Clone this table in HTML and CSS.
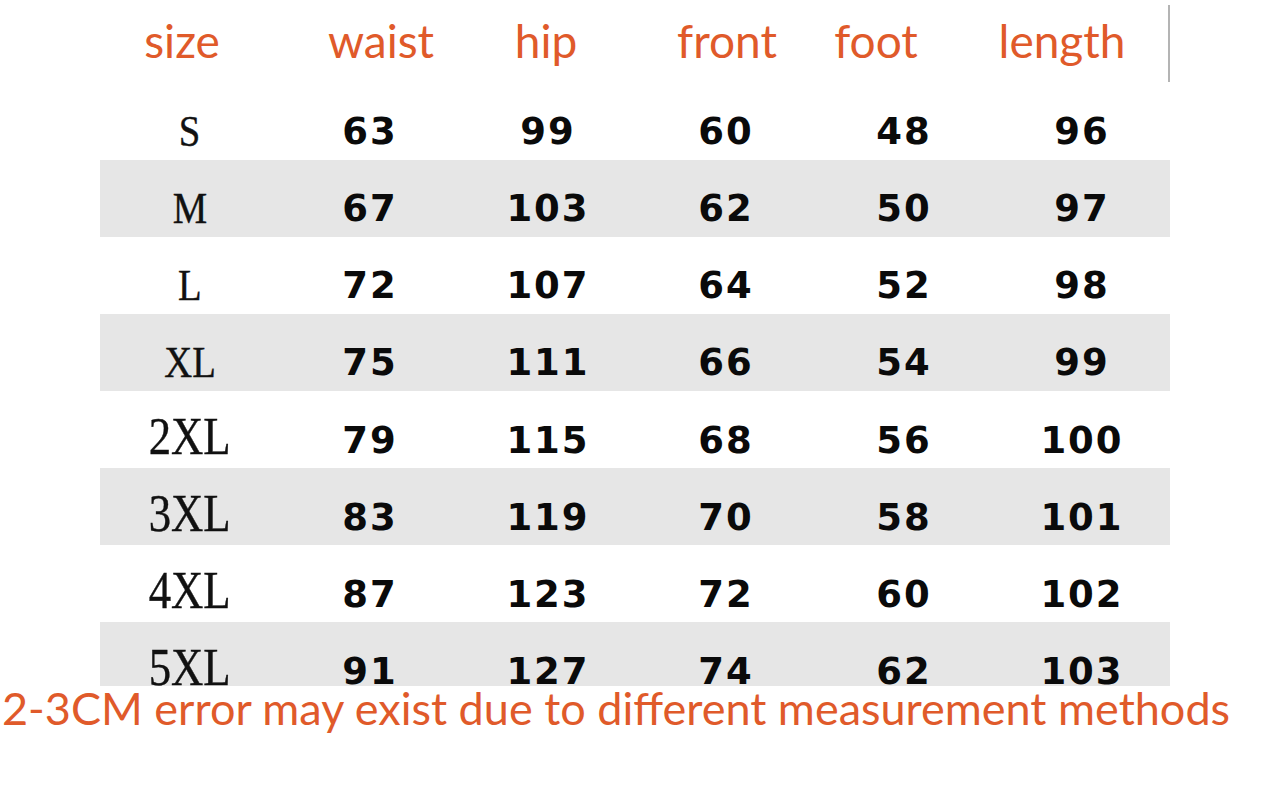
FILE: index.html
```html
<!DOCTYPE html>
<html>
<head>
<meta charset="utf-8">
<title>Size chart</title>
<link rel="stylesheet" href="styles.css">
</head>
<body>
<div class="page">
  <div class="head-wrap">
    <div class="head">
      <div class="hc">size</div>
      <div class="hc">waist</div>
      <div class="hc">hip</div>
      <div class="hc">front</div>
      <div class="hc">foot</div>
      <div class="hc">length</div>
    </div>
  </div>
  <div class="table">
    <div class="row"><div class="sz"><span>S</span></div><div class="n">63</div><div class="n">99</div><div class="n">60</div><div class="n">48</div><div class="n">96</div></div>
    <div class="row alt"><div class="sz"><span>M</span></div><div class="n">67</div><div class="n">103</div><div class="n">62</div><div class="n">50</div><div class="n">97</div></div>
    <div class="row"><div class="sz"><span>L</span></div><div class="n">72</div><div class="n">107</div><div class="n">64</div><div class="n">52</div><div class="n">98</div></div>
    <div class="row alt"><div class="sz"><span>XL</span></div><div class="n">75</div><div class="n">111</div><div class="n">66</div><div class="n">54</div><div class="n">99</div></div>
    <div class="row"><div class="sz big"><span>2XL</span></div><div class="n">79</div><div class="n">115</div><div class="n">68</div><div class="n">56</div><div class="n">100</div></div>
    <div class="row alt"><div class="sz big"><span>3XL</span></div><div class="n">83</div><div class="n">119</div><div class="n">70</div><div class="n">58</div><div class="n">101</div></div>
    <div class="row"><div class="sz big"><span>4XL</span></div><div class="n">87</div><div class="n">123</div><div class="n">72</div><div class="n">60</div><div class="n">102</div></div>
    <div class="row alt"><div class="sz big"><span>5XL</span></div><div class="n">91</div><div class="n">127</div><div class="n">74</div><div class="n">62</div><div class="n">103</div></div>
  </div>
  <div class="note">2-3CM error may exist due to different measurement methods</div>
</div>
</body>
</html>
```
FILE: styles.css
```css
html, body {
  margin: 0;
  padding: 0;
  background: #ffffff;
}
.page {
  width: 1280px;
  height: 794px;
  overflow: hidden;
}
.head-wrap {
  height: 83px;
  padding-top: 5px;
  box-sizing: border-box;
  margin-left: 100px;
  width: 1070px;
}
.head {
  height: 77px;
  border-right: 2px solid #b4b4b4;
  display: grid;
  grid-template-columns: 164px 234px 96px 266px 32px 340px;
  align-items: center;
}
.hc {
  display: flex;
  justify-content: center;
  white-space: nowrap;
  font-family: "Lato", "Liberation Sans", sans-serif;
  font-size: 46px;
  line-height: 1;
  color: #e05a2a;
  padding-bottom: 6px;
}
.table {
  margin-left: 100px;
  width: 1070px;
  height: 603px;
  overflow: hidden;
}
.row {
  height: 77px;
  box-sizing: border-box;
  padding-top: 20px;
  display: grid;
  grid-template-columns: 180px 178px 178px 178px 178px 178px;
  align-items: center;
}
.row.alt {
  background: #e6e6e6;
}
.sz {
  display: flex;
  justify-content: center;
  font-family: "Liberation Serif", serif;
  font-size: 45px;
  line-height: 1;
  color: #111;
  white-space: nowrap;
  -webkit-text-stroke: 0.4px #111;
}
.sz span {
  display: inline-block;
  transform: scaleX(0.86);
}
.sz.big {
  font-size: 52px;
  padding-bottom: 6px;
}
.n {
  display: flex;
  justify-content: center;
  font-family: "DejaVu Sans", sans-serif;
  font-weight: 700;
  font-size: 37px;
  line-height: 1;
  letter-spacing: 2px;
  padding-left: 2px;
  color: #0a0a0a;
}
.note {
  font-family: "Lato", "Liberation Sans", sans-serif;
  font-size: 45px;
  line-height: 44px;
  color: #e05a2a;
  white-space: nowrap;
  padding-left: 2px;
}
```
